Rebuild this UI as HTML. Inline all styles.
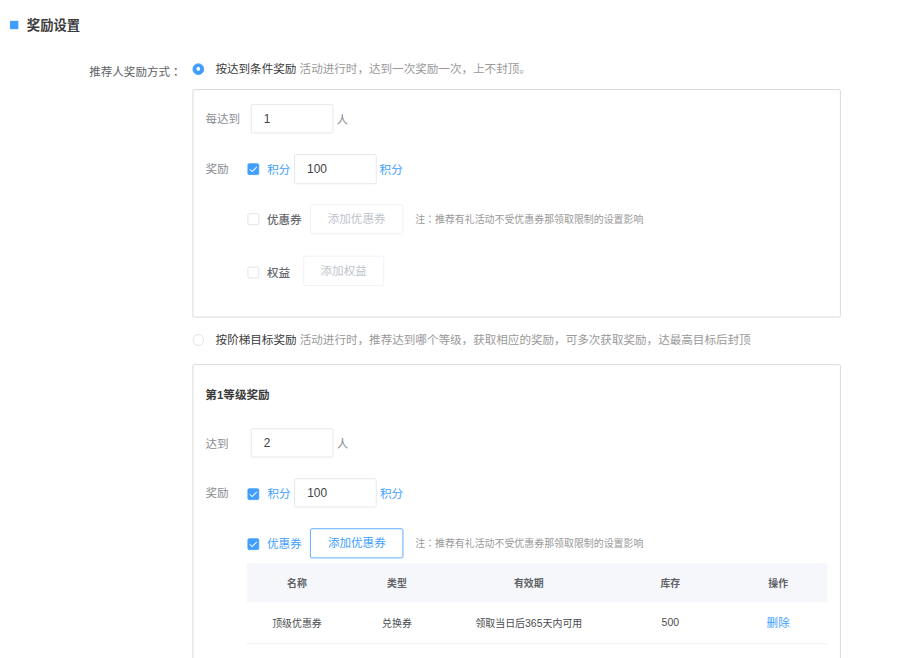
<!DOCTYPE html>
<html lang="zh-CN">
<head>
<meta charset="utf-8">
<title>奖励设置</title>
<style>
html,body{margin:0;padding:0;background:#fff;}
body{width:900px;height:658px;overflow:hidden;position:relative;font-family:"Liberation Sans","Noto Sans CJK SC",sans-serif;}
#stage{position:absolute;left:0;top:0;width:1080px;height:790px;transform:scale(0.833333);transform-origin:0 0;font-size:13.89px;color:#606266;}
#stage *{box-sizing:border-box;}
.t{position:absolute;white-space:nowrap;line-height:20px;height:20px;}
.sq{position:absolute;left:12px;top:25px;width:10px;height:10px;background:#409eff;}
.title{left:32.2px;top:20.6px;font-size:16px;font-weight:bold;color:#3c3c3c;}
.box{position:absolute;border:1px solid #d2d2d2;border-radius:2px;background:#fff;}
.radio{position:absolute;width:14px;height:14px;border-radius:50%;border:1px solid #dcdfe6;background:#fff;}
.radio.on{border-color:#409eff;background:#409eff;}
.radio.on:after{content:"";position:absolute;left:3.8px;top:3.8px;width:4.4px;height:4.4px;border-radius:50%;background:#fff;}
.ck{position:absolute;width:14px;height:14px;border:1px solid #dcdfe6;border-radius:2px;background:#fff;}
.ck.on{border-color:#409eff;background:#409eff;}
.ck svg{position:absolute;left:-1px;top:-1px;width:14px;height:14px;display:block;}
.inp{position:absolute;width:99.3px;height:35.3px;border:1px solid #e0e3e9;border-radius:2px;background:#fff;color:#404246;font-size:14.3px;line-height:33.3px;padding-left:14.7px;padding-top:0.5px;}
.btn{position:absolute;height:35.6px;border:1px solid #ebeef5;border-radius:2.5px;background:#fff;color:#c0c4cc;font-size:13.89px;line-height:33.6px;text-align:center;padding-top:0.8px;}
.btn.pri{border-color:#409eff;color:#409eff;}
.g6{color:#8a8d93;}
.g9{color:#999;}
.d3{color:#3a3a3a;}
.bl{color:#409eff;}
.m{font-weight:500;}
.b{font-weight:bold;}
.um{color:#666a70;}
.rw{color:#4a4c51;}
.s12{font-size:11.91px;}
.c{text-align:center;}
.jp{font-family:"Liberation Sans","Noto Sans CJK JP",sans-serif;}
</style>
</head>
<body>
<div id="stage">
  <div class="sq"></div>
  <div class="t title">奖励设置</div>

  <div class="t" style="left:107px;top:75.6px;">推荐人奖励方式<span class="jp" lang="ja">：</span></div>

  <div class="radio on" style="left:231px;top:75.7px;"></div>
  <div class="t" style="left:258.5px;top:73.1px;"><span class="d3">按达到条件奖励</span> <span class="g9">活动进行时，达到一次奖励一次，上不封顶。</span></div>

  <div class="box" style="left:230.7px;top:107.4px;width:778.2px;height:273.2px;"></div>
  <div class="t g6" style="left:246.6px;top:133.1px;">每达到</div>
  <div class="inp" style="left:300.7px;top:125px;">1</div>
  <div class="t g6" style="left:403.8px;top:133.8px;">人</div>

  <div class="t g6" style="left:246.6px;top:193.4px;">奖励</div>
  <div class="ck on" style="left:296.7px;top:195.5px;"><svg viewBox="0 0 14 14"><polyline points="2.7,7.1 5.6,9.9 11.3,4.1" fill="none" stroke="#fff" stroke-width="1.25"/></svg></div>
  <div class="t bl" style="left:320.6px;top:194px;">积分</div>
  <div class="inp" style="left:352.8px;top:185.4px;">100</div>
  <div class="t bl" style="left:455.5px;top:194.2px;">积分</div>

  <div class="ck" style="left:296.7px;top:255.5px;"></div>
  <div class="t m um" style="left:320.4px;top:253.7px;">优惠券</div>
  <div class="btn" style="left:372px;top:245px;width:112px;">添加优惠券</div>
  <div class="t s12 g9" style="left:498.2px;top:253.7px;">注<span class="jp" lang="ja">：</span>推荐有礼活动不受优惠券那领取限制的设置影响</div>

  <div class="ck" style="left:296.7px;top:319.9px;"></div>
  <div class="t m um" style="left:320.4px;top:317.4px;">权益</div>
  <div class="btn" style="left:363.6px;top:307px;width:97.6px;">添加权益</div>

  <div class="radio" style="left:231.4px;top:401.2px;"></div>
  <div class="t" style="left:258.7px;top:398.2px;"><span class="d3">按阶梯目标奖励</span> <span class="g9">活动进行时，推荐达到哪个等级，获取相应的奖励，可多次获取奖励，达最高目标后封顶</span></div>

  <div class="box" style="left:230.7px;top:436.6px;width:778.2px;height:400px;"></div>
  <div class="t b d3" style="left:246.4px;top:463.6px;">第1等级奖励</div>

  <div class="t g6" style="left:246.6px;top:523.1px;">达到</div>
  <div class="inp" style="left:300.7px;top:513.9px;">2</div>
  <div class="t g6" style="left:404.2px;top:523.2px;">人</div>

  <div class="t g6" style="left:246.6px;top:582.2px;">奖励</div>
  <div class="ck on" style="left:296.7px;top:585.8px;"><svg viewBox="0 0 14 14"><polyline points="2.7,7.1 5.6,9.9 11.3,4.1" fill="none" stroke="#fff" stroke-width="1.25"/></svg></div>
  <div class="t bl" style="left:321px;top:582.6px;">积分</div>
  <div class="inp" style="left:353px;top:574px;">100</div>
  <div class="t bl" style="left:456px;top:582.6px;">积分</div>

  <div class="ck on" style="left:296.7px;top:646px;"><svg viewBox="0 0 14 14"><polyline points="2.7,7.1 5.6,9.9 11.3,4.1" fill="none" stroke="#fff" stroke-width="1.25"/></svg></div>
  <div class="t bl" style="left:320.4px;top:643px;">优惠券</div>
  <div class="btn pri" style="left:372.2px;top:634.2px;width:112px;">添加优惠券</div>
  <div class="t s12 g9" style="left:498.2px;top:642.5px;">注<span class="jp" lang="ja">：</span>推荐有礼活动不受优惠券那领取限制的设置影响</div>

  <div style="position:absolute;left:295.9px;top:676.1px;width:697px;height:47.2px;background:#f5f7fa;"></div>
  <div style="position:absolute;left:295.9px;top:771.5px;width:697px;height:1px;background:#ebeef5;"></div>

  <div class="t s12 b c" style="left:296.4px;width:120px;top:689.6px;">名称</div>
  <div class="t s12 b c" style="left:416.4px;width:120px;top:689.6px;">类型</div>
  <div class="t s12 b c" style="left:536.6px;width:196px;top:689.6px;">有效期</div>
  <div class="t s12 b c" style="left:734.4px;width:140px;top:689.6px;">库存</div>
  <div class="t s12 b c" style="left:873.8px;width:120px;top:689.6px;">操作</div>

  <div class="t s12 rw c" style="left:296.4px;width:120px;top:738px;">顶级优惠券</div>
  <div class="t s12 rw c" style="left:416.4px;width:120px;top:738px;">兑换券</div>
  <div class="t s12 rw c" style="left:536.6px;width:196px;top:738px;">领取当日后<span style="font-size:12.6px;">365</span>天内可用</div>
  <div class="t s12 rw c" style="left:734.4px;width:140px;top:737px;font-size:12.6px;">500</div>
  <div class="t bl c" style="left:873.8px;width:120px;top:738px;">删除</div>
</div>
</body>
</html>
